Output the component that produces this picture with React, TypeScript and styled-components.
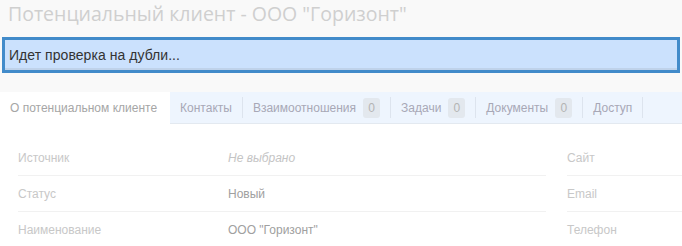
import React from "react";
import styled, { createGlobalStyle } from "styled-components";

const Global = createGlobalStyle`
  html, body { margin: 0; padding: 0; background: #f9f9f9; overflow: hidden; }
  body { font-family: Arial, "Liberation Sans", sans-serif; }
`;

const Page = styled.div`
  width: 682px;
  height: 246px;
  overflow: hidden;
`;

const Title = styled.h1`
  margin: 0;
  padding: 0 0 0 8px;
  height: 28px;
  line-height: 28px;
  font-family: "Open Sans", sans-serif;
  font-weight: 400;
  font-size: 19.5px;
  color: #cfcfcf;
  white-space: nowrap;
`;

const Notice = styled.div`
  margin: 9px 2px 0 2px;
  height: 30px;
  border: 3px solid #428bca;
  background: #cbe1fd;
  box-shadow: inset 0 -2px 0 #bfd2ea;
  padding: 0 0 0 4px;
  display: flex;
  align-items: center;
  font-family: "Liberation Sans", Arial, sans-serif;
  font-size: 14px;
  letter-spacing: 0.05px;
  color: #333333;
`;

const TabBar = styled.div`
  margin-top: 19px;
  height: 31px;
  display: flex;
  align-items: stretch;
  background: #eef5fe;
  border-bottom: 1px solid #e3e9f0;
  font-family: "Liberation Sans", Arial, sans-serif;
  font-size: 12px;
`;

const Tab = styled.div<{ $active?: boolean }>`
  display: flex;
  align-items: center;
  gap: 7px;
  padding: 0 ${(p) => (p.$active ? "13px" : "10px")} 0 10px;
  color: ${(p) => (p.$active ? "#a6a6a6" : "#a8a8b6")};
  background: ${(p) => (p.$active ? "#ffffff" : "transparent")};
  margin-bottom: ${(p) => (p.$active ? "-1px" : "0")};
  white-space: nowrap;
`;

const TabSep = styled.div`
  width: 1px;
  background: #dde4ee;
  margin: 5px 0;
`;

const Badge = styled.span`
  display: inline-flex;
  align-items: center;
  justify-content: center;
  min-width: 17px;
  height: 20px;
  border-radius: 3px;
  background: #e3e8ee;
  color: #b4b4b4;
`;

const Content = styled.div`
  background: #ffffff;
  display: flex;
  gap: 21px;
  padding: 16px 0 0 18px;
  height: 200px;
  font-family: "Liberation Sans", Arial, sans-serif;
  font-size: 12px;
`;

const Column = styled.div<{ $width: number }>`
  width: ${(p) => p.$width}px;
  flex: none;
`;

const Row = styled.div`
  display: flex;
  align-items: center;
  height: 35px;
  border-bottom: 1px solid #f1f1f1;
  &:last-child { border-bottom: none; }
`;

const Label = styled.div`
  width: 210px;
  flex: none;
  color: #c8c8c8;
`;

const Value = styled.div<{ $empty?: boolean }>`
  color: ${(p) => (p.$empty ? "#c4c4c4" : "#a0a0a0")};
  font-style: ${(p) => (p.$empty ? "italic" : "normal")};
`;

const tabs = [
  { label: "Контакты" },
  { label: "Взаимоотношения", badge: "0" },
  { label: "Задачи", badge: "0" },
  { label: "Документы", badge: "0" },
  { label: "Доступ" },
];

const leftRows = [
  { label: "Источник", value: "Не выбрано", empty: true },
  { label: "Статус", value: "Новый" },
  { label: "Наименование", value: "ООО \"Горизонт\"" },
];

const rightRows = ["Сайт", "Email", "Телефон"];

export default function App() {
  return (
    <Page>
      <Global />
      <Title>Потенциальный клиент - ООО "Горизонт"</Title>
      <Notice>Идет проверка на дубли...</Notice>
      <TabBar>
        <Tab $active>О потенциальном клиенте</Tab>
        {tabs.map((t) => (
          <React.Fragment key={t.label}>
            <Tab>
              {t.label}
              {t.badge && <Badge>{t.badge}</Badge>}
            </Tab>
            <TabSep />
          </React.Fragment>
        ))}
      </TabBar>
      <Content>
        <Column $width={528}>
          {leftRows.map((r) => (
            <Row key={r.label}>
              <Label>{r.label}</Label>
              <Value $empty={r.empty}>{r.value}</Value>
            </Row>
          ))}
        </Column>
        <Column $width={200}>
          {rightRows.map((r) => (
            <Row key={r}>
              <Label>{r}</Label>
            </Row>
          ))}
        </Column>
      </Content>
    </Page>
  );
}
